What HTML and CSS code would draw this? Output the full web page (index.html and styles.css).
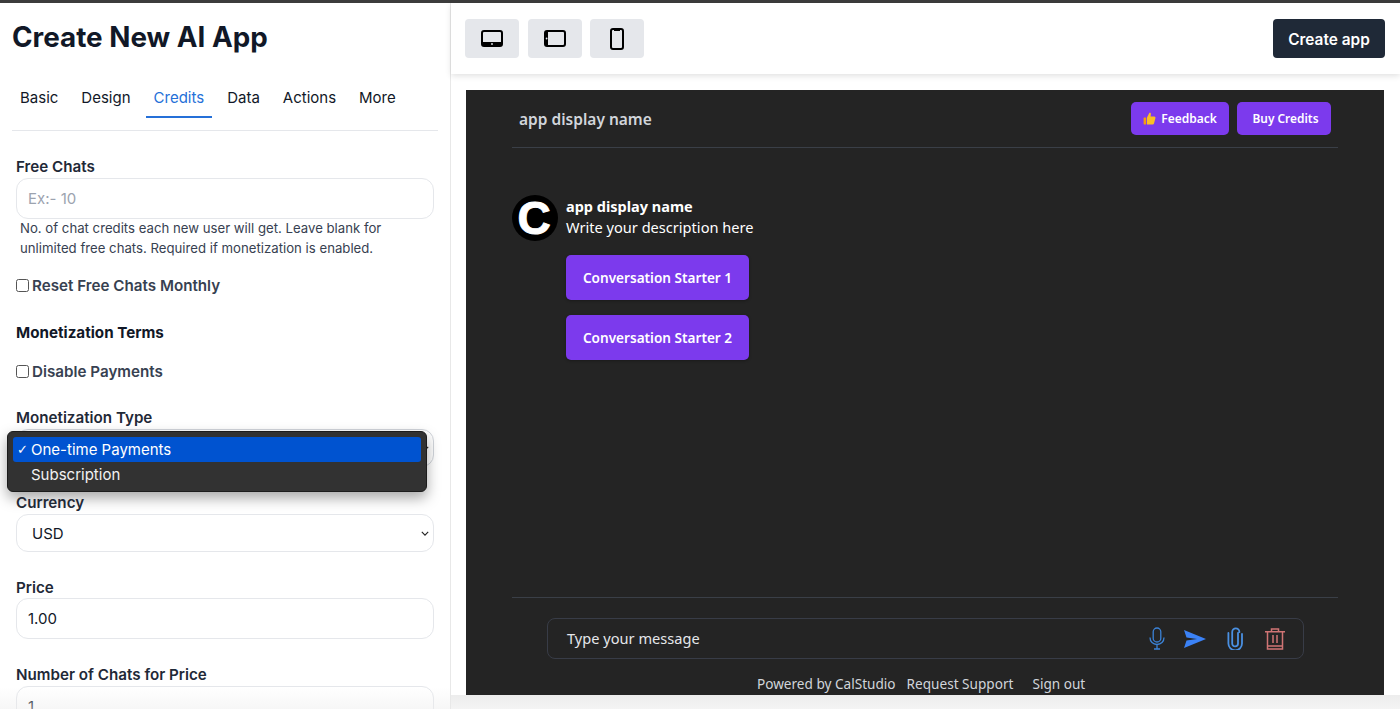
FILE: index.html
```html
<!DOCTYPE html>
<html>
<head>
  <meta charset="UTF-8" />
  <title>Create New AI App</title>
  <link rel="stylesheet" href="styles.css">
</head>
<body>
  <div class="top-line"></div>
  <div class="main">
    <div class="left-panel">
      <h1>Create New AI App</h1>
      <ul class="tabs">
        <li>Basic</li>
        <li>Design</li>
        <li class="active">Credits</li>
        <li>Data</li>
        <li>Actions</li>
        <li>More</li>
      </ul>

      <div class="field free-chats">
        <label>Free Chats</label>
        <input class="text-input" type="text" placeholder="Ex:- 10">
        <p class="help">No. of chat credits each new user will get. Leave blank for unlimited free chats. Required if monetization is enabled.</p>
      </div>
      <label class="check reset-check"><input type="checkbox"> Reset Free Chats Monthly</label>
      <h3>Monetization Terms</h3>
      <label class="check disable-check"><input type="checkbox"> Disable Payments</label>

      <div class="field type-field">
        <label>Monetization Type</label>
        <div class="select-box type-box">
          <span>One-time Payments</span>
          <svg class="chevron" viewBox="0 0 10 6"><path d="M1 1l4 4 4-4"/></svg>
        </div>
        <div class="popup">
          <div class="option selected"><span class="tick">✓</span>One-time Payments</div>
          <div class="option"><span class="tick"></span>Subscription</div>
        </div>
      </div>

      <div class="field currency-field">
        <label>Currency</label>
        <div class="select-box">
          <span>USD</span>
          <svg class="chevron" viewBox="0 0 10 6"><path d="M1 1l4 4 4-4"/></svg>
        </div>
      </div>

      <div class="field price-field">
        <label>Price</label>
        <input class="text-input" type="text" value="1.00">
      </div>

      <div class="field chats-field">
        <label>Number of Chats for Price</label>
        <input class="text-input" type="text" value="1">
      </div>
      <div class="bottom-fade"></div>
    </div>

    <div class="right-panel">
      <div class="toolbar">
        <div class="devices">
          <button class="device-btn">
            <svg width="22" height="17" viewBox="0 0 22 17"><rect x="1" y="1" width="20" height="15" rx="2" fill="none" stroke="#000" stroke-width="2"/><rect x="1" y="12" width="20" height="4" fill="#000"/><circle cx="11" cy="14" r="0.9" fill="#e5e7eb"/></svg>
          </button>
          <button class="device-btn">
            <svg width="22" height="17" viewBox="0 0 22 17"><rect x="1" y="1" width="20" height="15" rx="2" fill="none" stroke="#000" stroke-width="2"/><rect x="1" y="1" width="3" height="15" fill="#000"/><circle cx="2.6" cy="8.5" r="0.9" fill="#e5e7eb"/></svg>
          </button>
          <button class="device-btn">
            <svg width="14" height="22" viewBox="0 0 14 22"><rect x="1" y="1" width="12" height="20" rx="2" fill="none" stroke="#000" stroke-width="2"/><rect x="4" y="1" width="6" height="2" fill="#000"/></svg>
          </button>
        </div>
        <button class="create-btn">Create app</button>
      </div>

      <div class="chat-area">
        <div class="chat">
          <div class="chat-header">
            <span class="app-name">app display name</span>
            <div class="header-btns">
              <button class="purple-btn feedback">
                <svg width="13" height="13" viewBox="0 0 13 13"><path d="M4 5.5L6.4.8c.9-.3 1.6.3 1.5 1.2L7.6 4.6h3.6c1 0 1.5.8 1.2 1.6l-1.4 5.2c-.2.7-.7 1-1.3 1H4z" fill="#fbbf24"/><rect x="0.6" y="5.6" width="2.6" height="6.8" rx="0.6" fill="#f59e0b"/></svg>
                Feedback
              </button>
              <button class="purple-btn credits">Buy Credits</button>
            </div>
          </div>

          <div class="messages">
            <div class="intro">
              <div class="avatar">C</div>
              <div class="intro-text">
                <strong>app display name</strong>
                <span>Write your description here</span>
              </div>
            </div>
            <button class="starter">Conversation Starter 1</button>
            <button class="starter">Conversation Starter 2</button>
          </div>

          <div class="chat-bottom">
            <div class="msg-box">
              <span class="msg-text">Type your message</span>
              <div class="msg-icons">
                <svg class="mic-icon" width="16" height="23" viewBox="0 0 16 23" fill="none" stroke="#3b82d6" stroke-width="1.3"><rect x="4.2" y="1" width="7.6" height="14" rx="3.8"/><path d="M1 10.5c0 4.2 3 7 7 7s7-2.8 7-7M8 17.5V22M5 22h6"/></svg>
                <svg width="23" height="18" viewBox="0 0 23 18"><path d="M0 0l22 9L0 18l2.5-7.5L13 9 2.5 7.5z" fill="#3b82f6"/></svg>
                <svg width="16" height="23" viewBox="0 0 16 23" fill="none" stroke="#4a90e2" stroke-width="1.8" stroke-linecap="round"><path d="M11 6v10.5a2.9 2.9 0 0 1-5.8 0V5a3.6 3.6 0 0 1 7.2 0M15 7v9.5a6.8 6.8 0 0 1-13.6 0V6"/></svg>
                <svg class="trash-icon" width="20" height="22" viewBox="0 0 20 22" fill="none" stroke="#d07474" stroke-width="1.5"><path d="M0 3.7h20M6.5 3.7V1h7v2.7M2.5 3.7h15V21h-15zM2.5 18h15M8 7v8M12 7v8"/></svg>
              </div>
            </div>
            <div class="chat-footer">
              <span class="powered">Powered by CalStudio</span>
              <span class="support">Request Support</span>
              <span>Sign out</span>
            </div>
          </div>
        </div>
      </div>
    </div>
  </div>
</body>
</html>
```

FILE: styles.css
```css
* {
  margin: 0;
  padding: 0;
  box-sizing: border-box;
}
html, body {
  height: 709px;
  overflow: hidden;
}
body {
  background: white;
  font-family: Inter, "Liberation Sans", sans-serif;
  color: #1f2937;
}
.top-line {
  height: 3px;
  background: #3c3c3c;
}
.main {
  display: flex;
  height: 706px;
}

/* left side form */
.left-panel {
  position: relative;
  width: 451px;
  padding: 0 12px;
  border-right: 1px solid #e8e8e8;
  overflow: hidden;
}
h1 {
  font-size: 27.8px;
  line-height: 36px;
  margin-top: 16px;
  font-weight: 700;
  color: #111827;
}
.tabs {
  display: flex;
  gap: 7px;
  list-style: none;
  width: 426px;
  height: 76px;
  padding-top: 25px;
  border-bottom: 1px solid #e5e7eb;
}
.tabs li {
  height: 38px;
  padding: 8px 8px 0;
  font-size: 15px;
  line-height: 20px;
  color: #111827;
}
.tabs .active {
  color: #2570d8;
  border-bottom: 2px solid #2570d8;
}
.field {
  position: relative;
  padding-left: 4px;
}
.field label, h3 {
  display: block;
  font-size: 15.2px;
  font-weight: 600;
  line-height: 20px;
  color: #1f2937;
}
.text-input {
  display: block;
  width: 418px;
  height: 41px;
  padding: 0 11px;
  margin-top: 1px;
  border: 1px solid #e5e7eb;
  border-radius: 12px;
  font-family: Inter, "Liberation Sans", sans-serif;
  font-size: 15px;
  color: #111827;
  background: white;
}
.text-input::placeholder {
  color: #9ca3af;
}
.free-chats {
  margin-top: 26px;
}
.help {
  margin-left: 4px;
  font-size: 13.2px;
  line-height: 19.5px;
  color: #374151;
  width: 400px;
}
.check {
  display: flex;
  align-items: center;
  gap: 3px;
  padding-left: 4px;
  font-size: 15.2px;
  font-weight: 600;
  line-height: 20px;
  color: #374151;
}
.check input {
  width: 13px;
  height: 13px;
  margin-top: -2px;
  appearance: none;
  border: 1px solid #555;
  border-radius: 2.5px;
  background: white;
}
.reset-check {
  margin-top: 18px;
}
h3 {
  margin: 27px 0 0 4px;
  font-weight: 700;
  color: #111827;
}
.disable-check {
  margin-top: 19px;
}
.type-field {
  margin-top: 26px;
}
.select-box {
  display: flex;
  justify-content: space-between;
  align-items: center;
  width: 418px;
  height: 38px;
  margin-top: 1px;
  padding: 0 4px 0 15px;
  border: 1px solid #e5e7eb;
  border-radius: 12px;
  font-size: 15px;
  color: #111827;
}
.type-box {
  border-color: #d1d5db;
}
.chevron {
  width: 8px;
  height: 5px;
  fill: none;
  stroke: #222;
  stroke-width: 1.4;
}
.popup {
  position: absolute;
  left: -5px;
  top: 23px;
  width: 420px;
  height: 61px;
  padding: 5px 5px;
  background: #323232;
  border: 1px solid #1c1c1c;
  border-radius: 6px;
  box-shadow: 0 6px 14px rgba(0, 0, 0, 0.35);
  color: #f2f2f2;
  font-size: 15px;
}
.option {
  display: flex;
  align-items: center;
  height: 25px;
  border-radius: 3px;
  line-height: 25px;
}
.option.selected {
  background: #0053d0;
  color: white;
}
.tick {
  width: 18px;
  padding-left: 4px;
  font-size: 13px;
  font-family: "DejaVu Sans", sans-serif;
}
.currency-field {
  margin-top: 26px;
}
.price-field {
  margin-top: 26px;
}
.price-field .text-input {
  margin-top: 0;
}
.chats-field {
  margin-top: 26px;
}
.bottom-fade {
  position: absolute;
  left: 0;
  right: 0;
  bottom: 0;
  height: 22px;
  background: linear-gradient(rgba(238, 238, 238, 0), rgba(236, 236, 236, 0.45));
}

/* right side preview */
.right-panel {
  flex: 1;
  display: flex;
  flex-direction: column;
}
.toolbar {
  position: relative;
  display: flex;
  justify-content: space-between;
  align-items: center;
  height: 71px;
  padding: 0 15px 0 14px;
  box-shadow: 0 2px 6px rgba(0, 0, 0, 0.12);
}
.devices {
  display: flex;
  gap: 8.5px;
}
.device-btn {
  display: flex;
  align-items: center;
  justify-content: center;
  width: 54px;
  height: 39px;
  border: none;
  border-radius: 4px;
  background: #e5e7eb;
}
.create-btn {
  width: 112px;
  height: 39px;
  padding-top: 2px;
  border: none;
  border-radius: 4px;
  background: #1f2937;
  color: white;
  font-family: Inter, "Liberation Sans", sans-serif;
  font-size: 15.4px;
  font-weight: 600;
}
.chat-area {
  flex: 1;
  padding: 16px 16px 14px 15px;
  background: linear-gradient(white 621px, #ededed 621px, #f4f4f4);
}
.chat {
  display: flex;
  flex-direction: column;
  height: 605px;
  padding: 0 46px;
  background: #242424;
  font-family: "Noto Sans", "Open Sans", sans-serif;
  color: white;
}
.chat-header {
  display: flex;
  justify-content: space-between;
  align-items: center;
  height: 58px;
  padding: 0 7px 1px 7px;
  border-bottom: 1px solid #3a3f47;
}
.app-name {
  padding-top: 2px;
  font-size: 15.5px;
  font-weight: 600;
  color: #d1d5db;
}
.header-btns {
  display: flex;
  gap: 8px;
}
.purple-btn {
  display: flex;
  align-items: center;
  justify-content: center;
  gap: 5px;
  height: 33px;
  border: none;
  border-radius: 5px;
  background: #7c3aed;
  color: white;
  font-family: "Noto Sans", "Open Sans", sans-serif;
  font-size: 12px;
  font-weight: 600;
}
.feedback {
  width: 98px;
}
.credits {
  width: 94px;
  padding-left: 3px;
  font-size: 11.9px;
}
.messages {
  flex: 1;
  padding-top: 47px;
}
.intro {
  display: flex;
  gap: 8px;
}
.avatar {
  display: flex;
  align-items: center;
  justify-content: center;
  width: 46px;
  height: 46px;
  padding-right: 2px;
  border-radius: 50%;
  background: black;
  color: white;
  font-family: "Liberation Sans", sans-serif;
  font-size: 46px;
  font-weight: 700;
  -webkit-text-stroke: 1px white;
}
.intro-text {
  display: flex;
  flex-direction: column;
  font-size: 14.6px;
  line-height: 21px;
  padding-top: 1px;
}
.intro-text strong {
  font-size: 14.5px;
}
.starter {
  display: block;
  width: 183px;
  height: 45px;
  margin: 12px 0 15px 54px;
  border: none;
  border-radius: 5px;
  background: #7c3aed;
  color: white;
  font-family: "Noto Sans", "Open Sans", sans-serif;
  font-size: 13.6px;
  font-weight: 600;
  box-shadow: 0 1px 3px rgba(0, 0, 0, 0.3);
}
.intro + .starter {
  margin-top: 14px;
}
.chat-bottom {
  height: 98px;
  border-top: 1px solid #3a3f47;
  padding-top: 20px;
}
.msg-box {
  display: flex;
  justify-content: space-between;
  align-items: center;
  width: 757px;
  height: 41px;
  margin-left: 35px;
  padding: 0 18px 0 19px;
  border: 1px solid #383c47;
  border-radius: 8px;
}
.msg-text {
  margin-bottom: 2px;
  font-size: 14.6px;
  color: #e5e7eb;
}
.msg-icons {
  display: flex;
  align-items: center;
  gap: 20px;
}
.mic-icon {
  margin-right: -1px;
}
.trash-icon {
  margin-left: 2px;
}
.chat-footer {
  display: flex;
  height: 36px;
  padding: 15px 0 0 245px;
  font-size: 13.6px;
  line-height: 20px;
  color: #d1d5db;
  overflow: hidden;
}
.powered {
  margin-right: 11px;
}
.support {
  margin-right: 19px;
}
```
